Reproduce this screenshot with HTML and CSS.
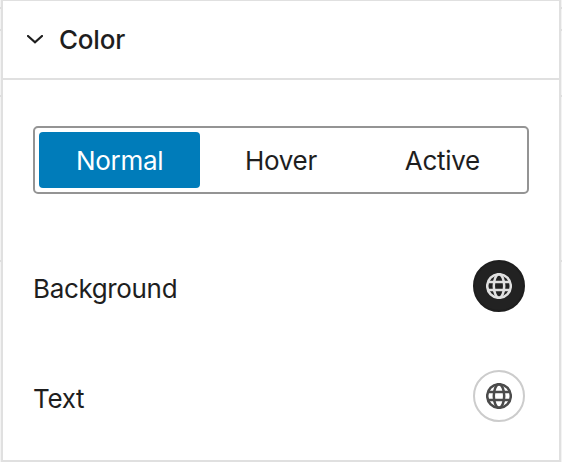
FILE: index.html
```html
<!DOCTYPE html>
<html lang="en">
<head>
<meta charset="utf-8">
<title>Color</title>
<link rel="stylesheet" href="styles.css">
</head>
<body>
<svg class="defs" width="0" height="0" aria-hidden="true">
  <symbol id="globe" viewBox="0 0 26 26">
    <g fill="none" stroke="currentColor" stroke-width="2.5">
      <circle cx="13" cy="13" r="11.8"/>
      <ellipse cx="13" cy="13" rx="5.2" ry="11.8"/>
      <path d="M2 9h22M2 17h22"/>
    </g>
  </symbol>
</svg>
<section class="panel">
  <header class="panel-header">
    <svg class="chevron" viewBox="0 0 16 9"><path d="M1 1l7 6.3L15 1"/></svg>
    <h2 class="title"><span>Color</span></h2>
  </header>
  <div class="panel-body">
    <div class="tabs">
      <button class="tab selected">Normal</button>
      <button class="tab">Hover</button>
      <button class="tab">Active</button>
    </div>
    <div class="row">
      <span class="label">Background</span>
      <button class="swatch dark" aria-label="Background"><svg class="globe"><use href="#globe"/></svg></button>
    </div>
    <div class="row">
      <span class="label">Text</span>
      <button class="swatch" aria-label="Text"><svg class="globe"><use href="#globe"/></svg></button>
    </div>
  </div>
</section>
</body>
</html>
```
FILE: styles.css
```css
* { box-sizing: border-box; }
body {
  margin: 0;
  height: 462px;
  padding: 0 1px;
  overflow: hidden;
  background:
    linear-gradient(#dedede, #dedede) 0 7px / 100% 2px no-repeat,
    linear-gradient(#dedede, #dedede) 0 29px / 100% 2px no-repeat,
    linear-gradient(#dedede, #dedede) 0 95px / 100% 2px no-repeat,
    linear-gradient(#dedede, #dedede) 0 260px / 100% 2px no-repeat,
    #f3f3f3;
  font-family: Inter, "Liberation Sans", sans-serif;
  font-size: 26px;
  color: #1e1e1e;
}
.defs { position: absolute; }
.panel {
  height: 462px;
  border: 2px solid #e0e0e0;
  border-top-width: 1px;
  background: #fff;
}
.panel-header {
  display: flex;
  align-items: center;
  gap: 16px;
  height: 79px;
  padding-left: 24px;
  border-bottom: 2px solid #e0e0e0;
}
.chevron {
  width: 16px;
  height: 9px;
  fill: none;
  stroke: #1e1e1e;
  stroke-width: 2.2;
  stroke-linecap: round;
}
.title {
  margin: 0;
  font-size: 26px;
  font-weight: 500;
  letter-spacing: -0.2px;
}
.panel-body { padding: 46px 30px 0; }
.tabs {
  display: grid;
  grid-template-columns: repeat(3, 1fr);
  height: 68px;
  padding: 4px;
  border: 2px solid #949494;
  border-radius: 5px;
}
button {
  padding: 0;
  border: 0;
  background: none;
  color: inherit;
  font: inherit;
}
.tab { border-radius: 4px; letter-spacing: -0.3px; }
.selected { background: #007cba; color: #fff; }
.row {
  display: flex;
  align-items: center;
  justify-content: space-between;
  height: 52px;
  padding-right: 4px;
  margin-top: 58px;
}
.tabs + .row { margin-top: 66px; }
.label { padding-top: 5px; letter-spacing: -0.35px; }
.swatch {
  display: flex;
  align-items: center;
  justify-content: center;
  width: 52px;
  height: 52px;
  border: 2px solid #ccc;
  border-radius: 50%;
  color: #4b4b4b;
}
.dark {
  border-color: #1e1e1e;
  background: #222;
  color: #e0e0e0;
}
.globe { width: 26px; height: 26px; }
```
